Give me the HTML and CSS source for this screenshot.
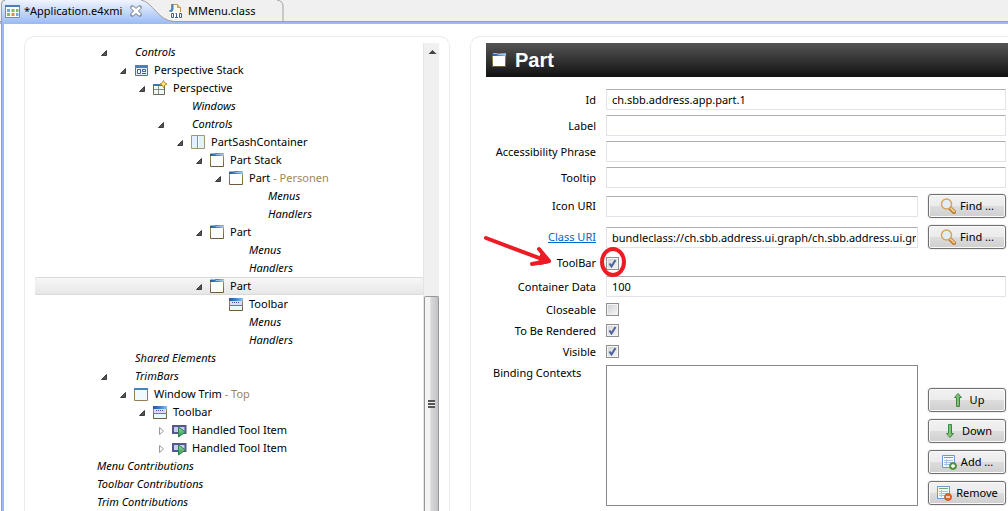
FILE: index.html
```html
<!DOCTYPE html>
<html lang="en">
<head>
<meta charset="utf-8">
<title>Application.e4xmi</title>
<link rel="stylesheet" href="styles.css">
</head>
<body>
<svg class="defs" aria-hidden="true">
  <defs>
    <linearGradient id="bar" x1="0" x2="1" y1="0" y2="0"><stop offset="0" stop-color="#2a5597"/><stop offset=".5" stop-color="#3f83cc"/><stop offset="1" stop-color="#8cc4ee"/></linearGradient>
    <linearGradient id="frame" x1="0" x2="0" y1="0" y2="1"><stop offset="0" stop-color="#b29655"/><stop offset="1" stop-color="#6b5b38"/></linearGradient>
    <linearGradient id="green" x1="0" x2="1" y1="0" y2="0"><stop offset="0" stop-color="#b5e0a4"/><stop offset="1" stop-color="#4ea24b"/></linearGradient>
    <linearGradient id="play" x1="0" x2="0" y1="0" y2="1"><stop offset="0" stop-color="#9ad79a"/><stop offset="1" stop-color="#279b50"/></linearGradient>
    <symbol id="open" viewBox="0 0 12 12"><path d="M3.500 9.500 8.500 4.500V9.500Z" fill="#555" stroke="#222" stroke-width=".8"/></symbol>
    <symbol id="closed" viewBox="0 0 12 12"><path d="M4.500 3.500v7L8.500 7Z" fill="#fff" stroke="#999"/></symbol>
    <symbol id="part" viewBox="0 0 16 16"><path d="M1.500 2v12.500h13V3" fill="#fcfefe" stroke="url(#frame)"/><path d="M1 2.500 2 1h13v3H1Z" fill="url(#bar)"/><path d="M2 1.500h4l1 1h8" fill="none" stroke="#a6cce9" stroke-width=".8"/></symbol>
    <symbol id="toolbar" viewBox="0 0 16 16"><path d="M1.500 3v11.500h13V3" fill="#e6f8fb" stroke="url(#frame)"/><path d="M1 2h14v3H1Z" fill="url(#bar)"/><path d="M2 5h12v4H2Z" fill="#d8dcf4"/><path d="M1 9.500h14" stroke="#7770a0"/><path d="M4 6.500h8" stroke="#4353a0" stroke-dasharray="1 1"/></symbol>
    <symbol id="trim" viewBox="0 0 16 16"><path d="M1.500 2.500h13v12h-13Z" fill="#eefaff" stroke="#947c57"/><path d="M1 2h14v2H1Z" fill="#4782bd"/></symbol>
    <symbol id="stack" viewBox="0 0 16 16"><path d="M2.500 3.500h12v10h-12Z" fill="#e4f3fb" stroke="#4677aa"/><path d="M2 3h13v3H2Z" fill="#4782bd"/><path d="M4.500 7.500h3v4h-3ZM9.500 7.500h3v2h-3ZM9 11.500h4" fill="#fff" stroke="#31619b"/></symbol>
    <symbol id="perspective" viewBox="0 0 16 16"><path d="M1.500 4.500h11v10h-11Z" fill="#eef8fb" stroke="#6c6950"/><path d="M1 4h9v2H1Z" fill="#3977b6"/><path d="M2 9.500h10M6.500 6v8" stroke="#8d927f"/><path d="m11.500.5 1.200 2.300 2.300 1.200-2.300 1.200-1.200 2.300-1.200-2.300L8 4l2.300-1.200Z" fill="#ffe98d" stroke="#c18a20"/></symbol>
    <symbol id="sash" viewBox="0 0 16 16"><path d="M1.500 1.500h13v13h-13Z" fill="#e3f1fa" stroke="#a29772"/><path d="M7.500 2v12" stroke="#7892b4"/><path d="M8.500 2v12" stroke="#fff"/></symbol>
    <symbol id="handled" viewBox="0 0 16 16"><path d="M2 4h12.500v7H2Z" fill="#c6ceef" stroke="#55588c" stroke-width="2"/><path d="M7.500 5v10l7-5Z" fill="url(#play)" stroke="#278650"/></symbol>
    <symbol id="model" viewBox="0 0 16 16"><path d="M1.500 2.500h14v12h-14Z" fill="#fff" stroke="#718bab"/><path d="M1 2h15v2H1Z" fill="#4e7fb6"/><path d="M3 6h3v3H3ZM12 10h2.500v3H12Z" fill="#6fa8dc"/><path d="M7.500 6h3v3h-3ZM3 10h3v3H3ZM12 6h2.500v3H12Z" fill="#81b76c"/><path d="M7.500 10h3v3h-3Z" fill="#dd8d4a"/></symbol>
    <symbol id="class" viewBox="0 0 16 18"><path d="M3.500 2.500h6l3 3v11h-9Z" fill="#fff9e9" stroke="#b99b5b"/><path d="M9.500 2.500v3h3" fill="#e7cf95" stroke="#b99b5b"/><path d="M4.500 2v5q0 2-3 2" fill="none" stroke="#4f7fb5" stroke-width="2"/><path d="M2 10h12v7H2Z" fill="#fff"/><path d="M3.500 11.500h2v4h-2ZM11.500 11.500h2v4h-2ZM7.500 11.500h1V15M7 15.500h3" fill="none" stroke="#35608f"/></symbol>
    <symbol id="find" viewBox="0 0 16 16"><path d="m10 10 4 4" stroke="#b87832" stroke-width="4" stroke-linecap="round"/><path d="m10.500 10 3.500 3.500" stroke="#f6c985" stroke-width="2" stroke-linecap="round"/><circle cx="6.500" cy="6" r="5" fill="#e2edf6" stroke="#d7a45f" stroke-width="1.500"/></symbol>
    <symbol id="up" viewBox="0 0 16 16"><path d="m8 1.500 3.500 4h-2v9h-3v-9h-2Z" fill="url(#green)" stroke="#39883c"/></symbol>
    <symbol id="down" viewBox="0 0 16 16"><path d="m8 14.500 3.500-4h-2v-9h-3v9h-2Z" fill="url(#green)" stroke="#39883c"/></symbol>
    <symbol id="list" viewBox="0 0 16 16"><path d="M1.500 1.500h12v12h-12Z" fill="#f5faff" stroke="#6d98cd"/><path d="M3 3.500h9" stroke="#70aa70"/><path d="M3 6.500h9M3 8.500h9M3 10.500h9M5.500 5v7" stroke="#a7c1df"/></symbol>
    <symbol id="add" viewBox="0 0 16 16"><use href="#list"/><circle cx="12" cy="12" r="3.500" fill="#5d9d43" stroke="#397729" stroke-width=".7"/><path d="M10 12h4M12 10v4" stroke="#fff" stroke-width="1.300"/></symbol>
    <symbol id="remove" viewBox="0 0 16 16"><use href="#list"/><circle cx="12" cy="12" r="3.500" fill="#e46a27" stroke="#ba4414" stroke-width=".7"/><path d="M10 12h4" stroke="#fff" stroke-width="1.300"/></symbol>
  </defs>
</svg>
<div class="editor">
  <nav class="tabs" role="tablist">
    <svg class="tab-shape" width="286" height="24" viewBox="0 0 286 24" aria-hidden="true">
      <defs><linearGradient id="tab" x1="0" x2="0" y1="0" y2="1"><stop offset="0" stop-color="#f0f5fe"/><stop offset="1" stop-color="#9abaf5"/></linearGradient></defs>
      <path d="M1.500 24V4q0-4 4-4h136c12 2 17 21 33 21.500V24Z" fill="url(#tab)"/>
      <path d="M1.500 24V4q0-4 4-4M141 0c12 2 17 21 33 21.500M277 0q6 1 6 6v15.500" fill="none" stroke="#a0a0a0"/>
    </svg>
    <button class="tab tab-active" role="tab" aria-selected="true"><svg class="icon"><use href="#model"/></svg>*Application.e4xmi
      <svg class="close" viewBox="0 0 12 12"><path d="M1 1h2.500L6 3.500 8.500 1H11v2.500L8.500 6 11 8.500V11H8.500L6 8.500 3.500 11H1V8.500L3.500 6 1 3.500Z" fill="#fff" stroke="#66707d"/></svg></button>
    <button class="tab" role="tab" aria-selected="false"><svg class="icon class-icon"><use href="#class"/></svg>MMenu.class</button>
  </nav>
  <main class="content">
    <section class="panel tree-panel">
      <div class="tree" role="tree">
        <div class="row l2 group" role="treeitem"><svg class="arrow"><use href="#open"/></svg><span class="icon"></span>Controls</div>
        <div class="row l3" role="treeitem"><svg class="arrow"><use href="#open"/></svg><svg class="icon"><use href="#stack"/></svg>Perspective Stack</div>
        <div class="row l4" role="treeitem"><svg class="arrow"><use href="#open"/></svg><svg class="icon"><use href="#perspective"/></svg>Perspective</div>
        <div class="row l5 group" role="treeitem"><span class="arrow"></span><span class="icon"></span>Windows</div>
        <div class="row l5 group" role="treeitem"><svg class="arrow"><use href="#open"/></svg><span class="icon"></span>Controls</div>
        <div class="row l6" role="treeitem"><svg class="arrow"><use href="#open"/></svg><svg class="icon"><use href="#sash"/></svg>PartSashContainer</div>
        <div class="row l7" role="treeitem"><svg class="arrow"><use href="#open"/></svg><svg class="icon"><use href="#part"/></svg>Part Stack</div>
        <div class="row l8" role="treeitem"><svg class="arrow"><use href="#open"/></svg><svg class="icon"><use href="#part"/></svg><span>Part <span class="hint">- Personen</span></span></div>
        <div class="row l9 group" role="treeitem"><span class="arrow"></span><span class="icon"></span>Menus</div>
        <div class="row l9 group" role="treeitem"><span class="arrow"></span><span class="icon"></span>Handlers</div>
        <div class="row l7" role="treeitem"><svg class="arrow"><use href="#open"/></svg><svg class="icon"><use href="#part"/></svg>Part</div>
        <div class="row l8 group" role="treeitem"><span class="arrow"></span><span class="icon"></span>Menus</div>
        <div class="row l8 group" role="treeitem"><span class="arrow"></span><span class="icon"></span>Handlers</div>
        <div class="row l7 selected" role="treeitem" aria-selected="true"><svg class="arrow"><use href="#open"/></svg><svg class="icon"><use href="#part"/></svg>Part</div>
        <div class="row l8" role="treeitem"><span class="arrow"></span><svg class="icon"><use href="#toolbar"/></svg>Toolbar</div>
        <div class="row l8 group" role="treeitem"><span class="arrow"></span><span class="icon"></span>Menus</div>
        <div class="row l8 group" role="treeitem"><span class="arrow"></span><span class="icon"></span>Handlers</div>
        <div class="row l2 group" role="treeitem"><span class="arrow"></span><span class="icon"></span>Shared Elements</div>
        <div class="row l2 group" role="treeitem"><svg class="arrow"><use href="#open"/></svg><span class="icon"></span>TrimBars</div>
        <div class="row l3" role="treeitem"><svg class="arrow"><use href="#open"/></svg><svg class="icon"><use href="#trim"/></svg><span>Window Trim <span class="hint">- Top</span></span></div>
        <div class="row l4" role="treeitem"><svg class="arrow"><use href="#open"/></svg><svg class="icon"><use href="#toolbar"/></svg>Toolbar</div>
        <div class="row l5" role="treeitem"><svg class="arrow"><use href="#closed"/></svg><svg class="icon"><use href="#handled"/></svg>Handled Tool Item</div>
        <div class="row l5" role="treeitem"><svg class="arrow"><use href="#closed"/></svg><svg class="icon"><use href="#handled"/></svg>Handled Tool Item</div>
        <div class="row l0 group" role="treeitem"><span class="arrow"></span><span class="icon"></span>Menu Contributions</div>
        <div class="row l0 group" role="treeitem"><span class="arrow"></span><span class="icon"></span>Toolbar Contributions</div>
        <div class="row l0 group" role="treeitem"><span class="arrow"></span><span class="icon"></span>Trim Contributions</div>
      </div>
      <div class="scrollbar" aria-hidden="true">
        <svg class="scroll-up" viewBox="0 0 16 18"><path d="m4.500 11 4-4 4 4Z" fill="#444"/></svg>
        <div class="thumb"><span class="grip"></span></div>
      </div>
    </section>
    <section class="panel detail-panel">
      <h1 class="title"><svg class="icon"><use href="#part"/></svg>Part</h1>
      <form class="form">
        <label for="id">Id</label><input class="text wide" id="id" value="ch.sbb.address.app.part.1">
        <label for="label">Label</label><input class="text wide" id="label">
        <label for="phrase">Accessibility Phrase</label><input class="text wide" id="phrase">
        <label for="tooltip">Tooltip</label><input class="text wide" id="tooltip">
        <label for="icon">Icon URI</label><input class="text" id="icon"><button class="button find" type="button"><svg class="icon"><use href="#find"/></svg>Find ...</button>
        <label for="class-uri"><a href="#class-uri">Class URI</a></label><input class="text" id="class-uri" value="bundleclass://ch.sbb.address.ui.graph/ch.sbb.address.ui.graph.GraphPart"><button class="button find" type="button"><svg class="icon"><use href="#find"/></svg>Find ...</button>
        <label for="toolbar-check">ToolBar</label>
        <div class="marked"><input class="check" type="checkbox" id="toolbar-check" checked>
          <svg class="marks" width="148" height="50" viewBox="0 0 148 50" aria-hidden="true"><g fill="none" stroke="#ed1c24" stroke-width="4" stroke-linecap="round" stroke-linejoin="round"><path d="M4 9 65 32M57 20l10 12-17 3"/><path d="m60 26 7 6-9 2Z" fill="#ed1c24"/><ellipse cx="131" cy="33" rx="11" ry="13"/></g></svg></div>
        <label for="data">Container Data</label><input class="text wide" id="data" value="100">
        <label for="closeable">Closeable</label><input class="check" type="checkbox" id="closeable">
        <label for="rendered">To Be Rendered</label><input class="check" type="checkbox" id="rendered" checked>
        <label for="visible">Visible</label><input class="check" type="checkbox" id="visible" checked>
        <label class="list-label" for="contexts">Binding Contexts</label>
        <select class="list" id="contexts" multiple></select>
        <div class="actions">
          <button class="button" type="button"><svg class="icon"><use href="#up"/></svg>Up</button>
          <button class="button" type="button"><svg class="icon"><use href="#down"/></svg>Down</button>
          <button class="button" type="button"><svg class="icon"><use href="#add"/></svg>Add ...</button>
          <button class="button" type="button"><svg class="icon"><use href="#remove"/></svg>Remove</button>
        </div>
      </form>
    </section>
  </main>
</div>
</body>
</html>
```
FILE: styles.css
```css
* { box-sizing: border-box; }
body {
  margin: 0;
  overflow: hidden;
  background: #fff;
  color: #000;
  font: 11px/16px "Noto Sans", "Open Sans", sans-serif;
}
button, input, select { font: inherit; color: inherit; }
.defs { position: absolute; width: 0; height: 0; }
.icon { width: 16px; height: 16px; flex: none; }
.editor {
  height: 100vh;
  display: flex;
  flex-direction: column;
}
.tabs {
  position: relative;
  flex: none;
  display: flex;
  height: 24px;
  padding-left: 4px;
  background: linear-gradient(#f0f0f0 21px, #a0a0a0 21px, #a0a0a0 22px, #9abaf5 22px);
}
.tab-shape { position: absolute; left: 0; top: 0; }
.tab {
  position: relative;
  display: flex;
  align-items: center;
  gap: 4px;
  height: 21px;
  padding: 0;
  border: 0;
  background: none;
  white-space: nowrap;
}
.tab-active { width: 164px; }
.close { width: 12px; height: 12px; margin-left: 4px; }
.class-icon { height: 18px; }
.content {
  flex: 1;
  min-height: 0;
  display: grid;
  grid-template-columns: 426fr 538fr;
  gap: 20px;
  padding: 12px 0 0 24px;
  background: linear-gradient(90deg, #fff 1px, #a0a0a0 1px 2px, #9abaf5 2px 4px, #fff 4px);
}
.panel {
  min-width: 0;
  min-height: 0;
  border: 1px solid #ebebeb;
  border-bottom: 0;
  border-radius: 10px 10px 0 0;
  padding-top: 6px;
}
.tree-panel {
  display: flex;
  padding-left: 10px;
  padding-right: 10px;
  overflow: hidden;
}
.tree { flex: 1; min-width: 0; }
.row {
  display: flex;
  align-items: center;
  height: 18px;
  white-space: nowrap;
}
.row .icon { margin: 0 5px 0 4px; }
.arrow { width: 12px; height: 12px; flex: none; }
.group { font-style: italic; }
.hint { color: #a08658; }
.selected {
  background: linear-gradient(#f8f8f8, #e6e6e6);
  box-shadow: inset 0 1px #d9d9d9, inset 0 -1px #d9d9d9;
  border-radius: 2px;
}
.l0 { padding-left: 25px; }
.l2 { padding-left: 63px; }
.l3 { padding-left: 82px; }
.l4 { padding-left: 101px; }
.l5 { padding-left: 120px; }
.l6 { padding-left: 139px; }
.l7 { padding-left: 158px; }
.l8 { padding-left: 177px; }
.l9 { padding-left: 196px; }
.scrollbar {
  flex: none;
  display: flex;
  flex-direction: column;
  justify-content: space-between;
  width: 16px;
  background: #f0f0f0;
  border-left: 1px solid #e4e4e4;
}
.scroll-up { width: 16px; height: 18px; }
.thumb {
  display: flex;
  align-items: center;
  justify-content: center;
  height: 46%;
  border: 1px solid #979797;
  border-bottom: 0;
  border-radius: 2px 2px 0 0;
  background: linear-gradient(90deg, #f4f4f4 0 35%, #dadadc 45%, #c2c3c7);
}
.grip {
  width: 7px;
  height: 8px;
  background: repeating-linear-gradient(#555 0 2px, #eee 2px 3px);
}
.detail-panel {
  border-right: 0;
  border-top-right-radius: 0;
  padding-left: 15px;
}
.title {
  display: flex;
  align-items: center;
  gap: 8px;
  height: 34px;
  margin: 0 0 12px;
  padding-left: 5px;
  background: linear-gradient(#555, #111);
  color: #fff;
  font: bold 20px/34px "Liberation Sans", Arial, sans-serif;
}
.form {
  display: grid;
  grid-template-columns: 110px minmax(0, 1fr) 78px;
  align-items: center;
  gap: 5px 10px;
  padding-right: 2px;
}
.form label {
  grid-column: 1;
  text-align: right;
  white-space: nowrap;
}
.form .list-label {
  align-self: start;
  padding-left: 7px;
  text-align: left;
}
a { color: #0066cc; }
.text {
  width: 100%;
  height: 21px;
  min-width: 0;
  padding: 0 1px 0 5px;
  border: 1px solid #e2e3ea;
  border-top-color: #abadb3;
  border-radius: 1px;
  background: #fff;
}
.wide { grid-column: 2 / 4; }
.marked { position: relative; height: 16px; padding: 2px 0; }
.marked .check { display: block; }
.marks { position: absolute; left: -124px; top: -26px; pointer-events: none; }
.check {
  appearance: none;
  width: 13px;
  height: 13px;
  margin: 1px 0 2px;
  border: 1px solid #8e8f8f;
  background: linear-gradient(135deg, #cfd1d4, #f6f6f6);
  box-shadow: inset 0 0 0 1px #f4f4f4;
}
.marked .check { margin: 0; }
.check:checked {
  background:
    url("data:image/svg+xml,%3Csvg xmlns='http://www.w3.org/2000/svg' viewBox='0 0 11 11'%3E%3Cpath d='M2.500 5.500 4.500 8.500 8.500 2' fill='none' stroke='%234b5f9e' stroke-width='2'/%3E%3C/svg%3E"),
    linear-gradient(135deg, #cfd1d4, #f6f6f6);
}
.find { margin: 1px 0; }
.button {
  display: flex;
  align-items: center;
  justify-content: center;
  gap: 4px;
  width: 100%;
  height: 24px;
  padding: 0;
  border: 1px solid #707070;
  border-radius: 3px;
  background: linear-gradient(#f2f2f2, #ebebeb 50%, #ddd 50%, #cfcfcf);
  box-shadow: inset 0 0 0 1px #fafafa, 0 0 0 1px #f0f0f0;
  white-space: nowrap;
}
.list {
  align-self: stretch;
  width: 100%;
  height: 100%;
  border: 1px solid #828790;
  border-radius: 0;
  background: #fff;
}
.actions {
  display: flex;
  flex-direction: column;
  gap: 7px;
  padding-top: 23px;
  padding-bottom: 1px;
}
```
